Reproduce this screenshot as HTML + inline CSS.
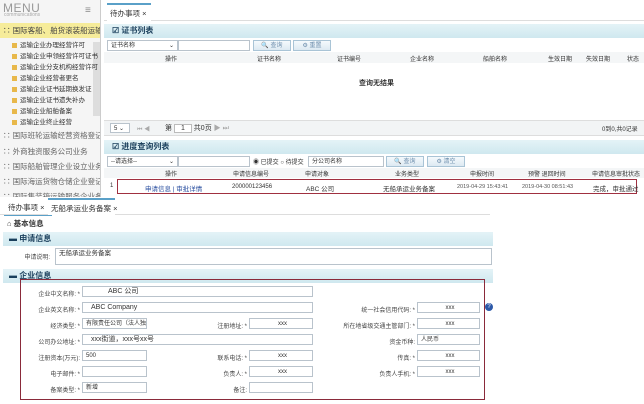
<!DOCTYPE html>
<html><head><meta charset="utf-8">
<style>
*{margin:0;padding:0;box-sizing:border-box}
body{width:644px;height:404px;overflow:hidden;background:#fff;font-family:"Liberation Sans","Noto Sans CJK SC",sans-serif;font-size:7px;color:#333;position:relative}
.a{position:absolute;white-space:nowrap}
.hd{position:absolute;background:linear-gradient(#e4f3f7,#cfe8ef);font-weight:bold;font-size:8px;color:#1a3f5c;padding-left:8px;line-height:14px}
.in{position:absolute;border:1px solid #b9c3cc;background:#fff;font-size:7px;line-height:10px;padding-left:3px}
.btn{position:absolute;border:1px solid #a9c4d6;background:linear-gradient(#f5fafd,#dde9f2);color:#6b8cab;font-size:6px;text-align:center;line-height:10px}
.lb{position:absolute;text-align:right;font-size:6px;color:#444;white-space:nowrap}
.mi{position:absolute;left:12px;font-size:6.5px;color:#333;white-space:nowrap}
.mi:before{content:"";display:inline-block;width:5px;height:5px;background:#e8b84a;margin-right:3px;vertical-align:middle}
.mg{position:absolute;left:3px;font-size:7.5px;color:#666;white-space:nowrap}
.th{font-size:6px;color:#333}
#sb{position:absolute;left:0;top:0;width:101px;height:200px;background:#f5f5f5;border-right:1px solid #ccc;overflow:hidden}
</style></head><body>
<!-- sidebar -->
<div id="sb">
<div class="a" style="left:3px;top:1px;font-size:12px;color:#999;letter-spacing:0.5px">MENU</div>
<div class="a" style="left:4px;top:12px;font-size:5px;color:#aaa">communications</div>
<div class="a" style="left:85px;top:5px;font-size:10px;color:#888">≡</div>
<div class="a" style="left:0;top:23px;width:100px;height:15px;background:#f6ec9a"></div>
<div class="mg" style="top:25px;color:#444">∷ 国际客船、舶货滚装船运输</div>
<div class="a" style="left:93px;top:42px;width:7px;height:74px;background:#ddd"></div>
<div class="mi" style="top:39px">运输企业办理经营许可</div>
<div class="mi" style="top:50px">运输企业申领经营许可证书</div>
<div class="mi" style="top:61px">运输企业分支机构经营许可</div>
<div class="mi" style="top:72px">运输企业经营者更名</div>
<div class="mi" style="top:83px">运输企业证书延期换发证</div>
<div class="mi" style="top:94px">运输企业证书遗失补办</div>
<div class="mi" style="top:105px">运输企业船舶备案</div>
<div class="mi" style="top:116px">运输企业终止经营</div>
<div class="mg" style="top:130px">∷ 国际班轮运输经营资格登记</div>
<div class="mg" style="top:146px">∷ 外商独资服务公司业务</div>
<div class="mg" style="top:161px">∷ 国际船舶管理企业设立业务</div>
<div class="mg" style="top:176px">∷ 国际海运货物仓储企业登记</div>
<div class="mg" style="top:191px">∷ 国际集装箱运输服务企业备</div>
</div>
<!-- top tab -->
<div class="a" style="left:104px;top:0;width:540px;height:21px;border-bottom:1px solid #ddd"></div>
<div class="a" style="left:107px;top:3px;width:44px;height:18px;border-top:2px solid #5aa0c8;background:#fff;font-size:7.5px;padding:3px 3px;color:#333">待办事项 ×</div>
<!-- cert list -->
<div class="hd" style="left:104px;top:24px;width:540px">☑ 证书列表</div>
<div class="in" style="left:107px;top:40px;width:71px;height:11px;font-size:6px">证书名称<span style="float:right;padding-right:3px">⌄</span></div>
<div class="in" style="left:178px;top:40px;width:72px;height:11px"></div>
<div class="btn" style="left:253px;top:40px;width:38px;height:11px">🔍 查询</div>
<div class="btn" style="left:293px;top:40px;width:38px;height:11px">⚙ 重置</div>
<div class="a" style="left:104px;top:52px;width:540px;height:11px;background:#f4f6f7"></div>
<div class="a th" style="left:165px;top:54px">操作</div>
<div class="a th" style="left:257px;top:54px">证书名称</div>
<div class="a th" style="left:337px;top:54px">证书编号</div>
<div class="a th" style="left:410px;top:54px">企业名称</div>
<div class="a th" style="left:483px;top:54px">船舶名称</div>
<div class="a th" style="left:548px;top:54px">生效日期</div>
<div class="a th" style="left:586px;top:54px">失效日期</div>
<div class="a th" style="left:627px;top:54px">状态</div>
<div class="a" style="left:359px;top:78px;font-size:7px;font-weight:bold">查询无结果</div>
<div class="a" style="left:104px;top:120px;width:540px;height:16px;background:#f2f4f5;border-top:1px solid #ddd;border-bottom:1px solid #ddd"></div>
<div class="in" style="left:110px;top:123px;width:20px;height:10px;font-size:6px">5 ⌄</div>
<div class="a" style="left:137px;top:124px;font-size:6px;color:#aaa">⏮ ◀</div>
<div class="a" style="left:165px;top:123px;font-size:7px">第 <span style="border:1px solid #bbb;padding:0 6px;background:#fff">1</span> 共0页 <span style="color:#aaa">▶ ⏭</span></div>
<div class="a" style="left:602px;top:124px;font-size:6px">0到0,共0记录</div>
<!-- progress list -->
<div class="hd" style="left:104px;top:140px;width:540px">☑ 进度查询列表</div>
<div class="in" style="left:107px;top:156px;width:71px;height:11px;font-size:6px">--请选择--<span style="float:right;padding-right:3px">⌄</span></div>
<div class="in" style="left:178px;top:156px;width:72px;height:11px"></div>
<div class="a" style="left:253px;top:157px;font-size:6px">◉ 已提交 ○ 待提交</div>
<div class="in" style="left:308px;top:156px;width:76px;height:11px;font-size:6px">分公司名称</div>
<div class="btn" style="left:386px;top:156px;width:38px;height:11px">🔍 查询</div>
<div class="btn" style="left:427px;top:156px;width:38px;height:11px">⚙ 清空</div>
<div class="a" style="left:104px;top:168px;width:540px;height:10px;background:#f4f6f7"></div>
<div class="a th" style="left:165px;top:169px">操作</div>
<div class="a th" style="left:233px;top:169px">申请信息编号</div>
<div class="a th" style="left:305px;top:169px">申请对象</div>
<div class="a th" style="left:395px;top:169px">业务类型</div>
<div class="a th" style="left:470px;top:169px">申报时间</div>
<div class="a th" style="left:528px;top:169px">预警 退回时间</div>
<div class="a th" style="left:592px;top:169px">申请信息审批状态</div>
<div class="a" style="left:110px;top:183px;font-size:6px">1</div>
<div class="a" style="left:117px;top:179px;width:520px;height:15px;border:1.5px solid #a03040"></div>
<div class="a" style="left:145px;top:183px;font-size:6.5px;color:#2a4fa0">申请信息 | 审批详情</div>
<div class="a" style="left:232px;top:184px;font-size:6px">200000123456</div>
<div class="a" style="left:306px;top:183px;font-size:6.5px">ABC 公司</div>
<div class="a" style="left:383px;top:183px;font-size:6.5px">无船承运业务备案</div>
<div class="a" style="left:457px;top:184px;font-size:5.5px;color:#555">2019-04-29 15:43:41</div>
<div class="a" style="left:522px;top:184px;font-size:5.5px;color:#555">2019-04-30 08:51:43</div>
<div class="a" style="left:593px;top:183px;font-size:6.5px">完成，审批通过</div>
<!-- bottom window -->
<div class="a" style="left:0;top:197px;width:644px;height:207px;background:#fff"></div>
<div class="a" style="left:0;top:214px;width:490px;height:1px;background:#ddd"></div>
<div class="a" style="left:8px;top:202px;font-size:7.5px">待办事项 ×</div>
<div class="a" style="left:48px;top:198px;width:67px;height:17px;border-top:2px solid #5aa0c8;background:#fff;font-size:7.5px;padding:3px 3px">无船承运业务备案 ×</div>
<div class="a" style="left:4px;top:215px;width:48px;height:13px;border-top:1px solid #5aa0c8;font-size:7.5px;font-weight:bold;padding:2px 3px;color:#333">⌂ 基本信息</div>
<div class="hd" style="left:3px;top:232px;width:490px;padding-left:6px">▬ 申请信息</div>
<div class="lb" style="left:20px;top:252px;width:30px">申请说明:</div>
<div class="in" style="left:55px;top:248px;width:437px;height:17px;font-size:6.5px">无船承运业务备案</div>
<div class="hd" style="left:3px;top:269px;width:490px;padding-left:6px">▬ 企业信息</div>
<div class="a" style="left:20px;top:279px;width:465px;height:121px;border:1.5px solid #8a2a3a"></div>
<div class="lb" style="left:20px;top:289px;width:60px">企业中文名称: *</div>
<div class="in" style="left:82px;top:286px;width:231px;height:11px;padding-left:25px">ABC 公司</div>
<div class="lb" style="left:20px;top:305px;width:60px">企业英文名称: *</div>
<div class="in" style="left:82px;top:302px;width:231px;height:11px;padding-left:8px">ABC Company</div>
<div class="lb" style="left:20px;top:321px;width:60px">经济类型: *</div>
<div class="in" style="left:82px;top:318px;width:65px;height:11px;font-size:6px;overflow:hidden">有限责任公司（法人独</div>
<div class="lb" style="left:190px;top:321px;width:57px">注册地址: *</div>
<div class="in" style="left:249px;top:318px;width:64px;height:11px;text-align:center;font-size:6px">xxx</div>
<div class="lb" style="left:340px;top:305px;width:75px">统一社会信用代码: *</div>
<div class="in" style="left:417px;top:302px;width:63px;height:11px;text-align:center;font-size:6px">xxx</div>
<div class="a" style="left:485px;top:303px;width:8px;height:8px;border-radius:50%;background:#2c58a8;color:#fff;font-size:6px;text-align:center;line-height:8px">?</div>
<div class="lb" style="left:340px;top:321px;width:75px">所在地省级交通主管部门: *</div>
<div class="in" style="left:417px;top:318px;width:63px;height:11px;text-align:center;font-size:6px">xxx</div>
<div class="lb" style="left:20px;top:337px;width:60px">公司办公地址: *</div>
<div class="in" style="left:82px;top:334px;width:231px;height:11px;padding-left:8px">xxx街道，xxx号xx号</div>
<div class="lb" style="left:340px;top:337px;width:75px">资金币种:</div>
<div class="in" style="left:417px;top:334px;width:63px;height:11px;font-size:6px">人民币</div>
<div class="lb" style="left:20px;top:353px;width:60px">注册资本(万元):</div>
<div class="in" style="left:82px;top:350px;width:65px;height:11px;font-size:6px">500</div>
<div class="lb" style="left:190px;top:353px;width:57px">联系电话: *</div>
<div class="in" style="left:249px;top:350px;width:64px;height:11px;text-align:center;font-size:6px">xxx</div>
<div class="lb" style="left:340px;top:353px;width:75px">传真: *</div>
<div class="in" style="left:417px;top:350px;width:63px;height:11px;text-align:center;font-size:6px">xxx</div>
<div class="lb" style="left:20px;top:369px;width:60px">电子邮件: *</div>
<div class="in" style="left:82px;top:366px;width:65px;height:11px"></div>
<div class="lb" style="left:190px;top:369px;width:57px">负责人: *</div>
<div class="in" style="left:249px;top:366px;width:64px;height:11px;text-align:center;font-size:6px">xxx</div>
<div class="lb" style="left:340px;top:369px;width:75px">负责人手机: *</div>
<div class="in" style="left:417px;top:366px;width:63px;height:11px;text-align:center;font-size:6px">xxx</div>
<div class="lb" style="left:20px;top:385px;width:60px">备案类型: *</div>
<div class="in" style="left:82px;top:382px;width:65px;height:11px;font-size:6px">新增</div>
<div class="lb" style="left:190px;top:385px;width:57px">备注:</div>
<div class="in" style="left:249px;top:382px;width:64px;height:11px"></div>
</body></html>
